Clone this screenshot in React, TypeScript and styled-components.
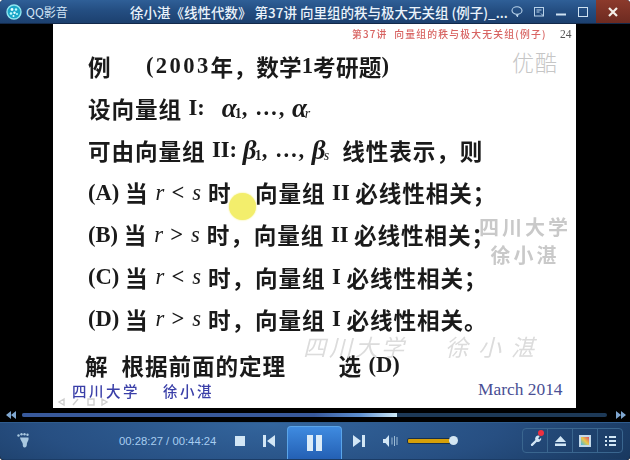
import React from "react";
import styled, { createGlobalStyle } from "styled-components";

const Global = createGlobalStyle`
  html, body { margin: 0; padding: 0; background: #fff; }
  #root { width: 630px; height: 460px; }
`;

const Win = styled.div`
  width: 630px; height: 460px; display: flex; flex-direction: column; overflow: hidden;
  background: #000; border-radius: 4px 4px 3px 3px;
  font-family: "Noto Sans CJK SC", "Liberation Sans", sans-serif;
`;
const TitleBar = styled.div`
  height: 24px; flex: none; display: flex; align-items: center; padding-left: 6px;
  background: linear-gradient(to bottom, #2f5f97 0%, #244e82 45%, #1c406f 100%);
  border-bottom: 1px solid #12294a; box-sizing: border-box;
`;
const AppName = styled.span`
  font: 12px "Noto Sans CJK SC", sans-serif; color: #d3e6f6; margin-left: 4px; width: 104px; white-space: nowrap;
`;
const Title = styled.span`
  font: 500 13.5px "Noto Sans CJK SC", sans-serif; color: #eaf3fb; width: 374px; white-space: nowrap;
`;
const WinButtons = styled.div`
  display: flex; align-items: center; margin-left: 2px; height: 100%;
`;
const WinBtn = styled.div`
  width: 22px; height: 23px; display: flex; align-items: center; justify-content: center;
`;
const CloseBtn = styled.div`
  width: 34px; height: 23px; margin-left: 2px; display: flex; align-items: center; justify-content: center;
  background: linear-gradient(#8c3a2c, #6d2a20);
`;
const Video = styled.div`
  height: 384px; flex: none; display: flex; justify-content: flex-start; padding-left: 53px; background: #000;
`;
const Slide = styled.div`
  position: relative; width: 523px; height: 384px; background: #fff; box-sizing: border-box; padding: 21px 0 0 35px;
  overflow: hidden;
`;
const Lines = styled.div`
  filter: blur(0.35px); color: #1a1a1a;
`;
const Line = styled.div<{ $h?: number; $shift?: number; $ls?: number }>`
  height: ${p => p.$h ?? 42.2}px; margin-left: ${p => p.$shift ?? 0}px; display: flex; align-items: center; white-space: pre;
  font: 700 22.6px "Liberation Serif", "Noto Sans CJK SC", serif; letter-spacing: ${p => p.$ls ?? 0.9}px;
  b { font-weight: 700; font-family: "Liberation Serif", serif; letter-spacing: 0; }
  i { font-family: "Liberation Serif", serif; font-style: italic; font-weight: 400; letter-spacing: 0; margin: 0 0.5px; }
  sub { font: italic 14px "Liberation Serif", serif; position: relative; top: 6px; vertical-align: baseline; line-height: 0; letter-spacing: 0; }
`;
const Year = styled.b`
  && { letter-spacing: 2.4px; }
`;
const Dots = styled.b`
  && { letter-spacing: 1px; }
`;
const Greek = styled.i`
  && { font-size: 27px; font-weight: 700; margin: 0 -2px 0 0; }
`;
const Num = styled.sub`
  && { font-style: normal; font-weight: 700; font-size: 14px; }
`;
const Header = styled.div`
  position: absolute; left: 299px; top: 3px; display: flex; align-items: center; filter: blur(0.3px);
  font: 500 9.8px "Noto Sans CJK SC", serif; color: #d86462; white-space: pre; letter-spacing: 1.2px;
`;
const PageNo = styled.span`
  position: absolute; left: 208px; top: 1px; color: #555; font: 11.5px "Liberation Serif", serif; letter-spacing: 0;
`;
const Youku = styled.div`
  position: absolute; left: 459px; top: 21px; font: 300 22px "Noto Sans CJK SC", sans-serif; color: #c6c6c6; letter-spacing: 1px;
`;
const Mark = styled.div`
  position: absolute; left: 425px; top: 189px; width: 94px; text-align: center; font: 700 20px/28px "Noto Sans CJK SC", serif;
  color: #c9c9c9; letter-spacing: 3px; filter: blur(0.3px);
`;
const MarkWide = styled.div`
  position: absolute; left: 250px; top: 305px; display: flex; gap: 38px; font: italic 400 23px "Noto Sans CJK SC", serif; color: #dcdcdc; white-space: pre; letter-spacing: 3px;
  filter: blur(0.4px);
`;
const MarkName = styled.span`
  letter-spacing: 10px;
`;
const Spot = styled.div`
  position: absolute; left: 176px; top: 169px; width: 27px; height: 27px; border-radius: 50%;
  background: #f3ee6c; box-shadow: 0 0 2px #f3ee6c;
`;
const Foot = styled.div`
  position: absolute; left: 19px; top: 356px; font: 500 14.5px "Noto Sans CJK SC", serif; color: #3a3fa8; white-space: pre; letter-spacing: 2.5px; filter: blur(0.3px);
`;
const March = styled.div`
  position: absolute; left: 425px; top: 355px; font: 17.4px "Liberation Serif", serif; color: #4a4f94;
`;
const SlideNav = styled.svg`
  position: absolute; left: 3px; top: 373px;
`;
const SeekRow = styled.div`
  height: 14px; flex: none; display: flex; align-items: center; background: #000; padding: 0 4px 0 6px;
`;
const Track = styled.div`
  flex: 1; height: 4px; margin: 0 9px 0 6px; border-radius: 2px; background: #1d3957; overflow: hidden;
`;
const Played = styled.div`
  height: 100%; background: linear-gradient(to right, #38599b 0%, #38599b 78%, #5d8fd0 90%, #cfeaf8 100%);
`;
const Controls = styled.div`
  flex: none; height: 38px; display: flex; align-items: center; position: relative;
  background: radial-gradient(ellipse 420px 90px at 270px 0, #33659d 0%, #274f82 55%, #17355a 100%);
  border-top: 1px solid #2f5c8e; border-bottom: 1px solid #1b3c66; box-sizing: border-box; padding: 0 0 1px 17px;
  border-radius: 0 0 4px 4px;
`;
const Time = styled.span`
  font: 11.3px "Liberation Sans", sans-serif; color: #a7cdf0; margin-left: 89px; width: 116px; white-space: nowrap;
`;
const Ico = styled.svg<{ $ml?: number }>`
  flex: none; display: block; margin-left: ${p => p.$ml ?? 0}px;
`;
const PlayBtn = styled.div`
  width: 55px; height: 33px; margin: 0 11px -1px 12px; align-self: flex-end; box-sizing: border-box; display: flex; align-items: center; justify-content: center;
  background: linear-gradient(#3f8be0, #2460b4); border: 1px solid #5aa5ea; border-bottom: 0; border-radius: 4px 4px 0 0; flex: none;
`;
const PauseBar = styled.div`
  width: 6px; height: 16px; background: #dcecf8; margin: 0 1.5px;
`;
const Volume = styled.div`
  width: 42px; height: 4px; margin-left: 9px; background: #d6a009; border: 1px solid #16304f; border-radius: 2px; flex: none; box-sizing: content-box;
`;
const Knob = styled.div`
  width: 9px; height: 9px; border-radius: 50%; background: #d3e6f3; margin-left: -2px; flex: none;
`;
const Tools = styled.div`
  display: flex; height: 23px; margin-left: 64px; border: 1px solid #3a668f; border-radius: 4px; flex: none; position: relative;
`;
const Tool = styled.div`
  width: 24px; display: flex; align-items: center; justify-content: center; border-left: 1px solid #3a668f;
  &:first-child { border-left: 0; }
`;
const Dot = styled.div`
  position: absolute; left: 15px; top: 1px; width: 6px; height: 6px; border-radius: 50%; background: #ee3040;
`;

export default function App() {
  return (
    <Win>
      <Global />
      <TitleBar>
        <Ico width="16" height="16" viewBox="0 0 16 16">
          <circle cx="8" cy="8" r="7" fill="#1aa6c8" stroke="#8fe6f0" strokeWidth="1.4" />
          <circle cx="6" cy="5.5" r="1.4" fill="#e8fbff" />
          <circle cx="10" cy="5.5" r="1.2" fill="#bff" />
          <circle cx="5" cy="9.5" r="1.3" fill="#bff" />
          <circle cx="8.5" cy="8.8" r="1.2" fill="#e8fbff" />
          <circle cx="11" cy="10" r="1" fill="#bff" />
          <circle cx="7.5" cy="12" r="1" fill="#e8fbff" />
        </Ico>
        <AppName>QQ影音</AppName>
        <Title>徐小湛《线性代数》 第37讲 向里组的秩与极大无关组 (例子)_...</Title>
        <WinButtons>
          <WinBtn>
            <Ico width="12" height="11" viewBox="0 0 12 11" fill="none" stroke="#b9d3ea" strokeWidth="1.1">
              <ellipse cx="6" cy="4.5" rx="5" ry="3.8" />
              <path d="M5 8.5 L6.5 10.500 L7 8" />
            </Ico>
          </WinBtn>
          <WinBtn>
            <Ico width="11" height="10" viewBox="0 0 11 10" fill="none" stroke="#b9d3ea" strokeWidth="1">
              <rect x="0.5" y="0.5" width="9" height="8.5" />
              <path d="M2.500 3h5M2.500 5h3M7 6.500l2.500 2.500" />
            </Ico>
          </WinBtn>
          <WinBtn>
            <Ico width="10" height="10" viewBox="0 0 10 10"><rect x="0" y="6.5" width="10" height="2" fill="#cfe2f2" /></Ico>
          </WinBtn>
          <WinBtn>
            <Ico width="10" height="10" viewBox="0 0 10 10" fill="none" stroke="#cfe2f2" strokeWidth="1"><rect x=".5" y=".5" width="9" height="9" /></Ico>
          </WinBtn>
          <CloseBtn>
            <Ico width="10" height="10" viewBox="0 0 10 10" stroke="#f4efe9" strokeWidth="2.2"><path d="M1 1l8 8M9 1l-8 8" /></Ico>
          </CloseBtn>
        </WinButtons>
      </TitleBar>
      <Video>
        <Slide>
          <Header>第37讲  向量组的秩与极大无关组(例子)<PageNo>24</PageNo></Header>
          <Youku>优酷</Youku>
          <Lines>
            <Line $ls={0.2}>例      <Year>(2003</Year>年，数学<b>1</b>考研题<b>)</b></Line>
            <Line>设向量组 <b>I:   </b><Greek>α</Greek><Num>1</Num><Dots>, …, </Dots><Greek>α</Greek><sub>r</sub></Line>
            <Line>可由向量组 <b>II: </b><Greek>β</Greek><Num>1</Num><Dots>, …, </Dots><Greek>β</Greek><sub>s</sub>  线性表示，则</Line>
            <Line><b>(A) </b>当 <i>r</i> &lt; <i>s</i> 时，向量组 <b>II </b>必线性相关；</Line>
            <Line><b>(B) </b>当 <i>r</i> &gt; <i>s</i> 时，向量组 <b>II </b>必线性相关；</Line>
            <Line><b>(C) </b>当 <i>r</i> &lt; <i>s</i> 时，向量组 <b>I </b>必线性相关；</Line>
            <Line><b>(D) </b>当 <i>r</i> &gt; <i>s</i> 时，向量组 <b>I </b>必线性相关。</Line>
            <Line $h={50} $shift={-3}>解  根据前面的定理        选 <b>(D)</b></Line>
          </Lines>
          <Mark>四川大学<br />徐小湛</Mark>
          <MarkWide><span>四川大学</span><MarkName>徐小湛</MarkName></MarkWide>
          <Spot />
          <Foot>四川大学    徐小湛</Foot>
          <March>March 2014</March>
          <SlideNav width="54" height="10" viewBox="0 0 54 10" fill="none" stroke="#cfcfcf" strokeWidth="1.4">
            <path d="M8 2L3 5l5 3zM17 8l5-6M32 2h6v6h-6zM46 2l5 3-5 3z" />
          </SlideNav>
        </Slide>
      </Video>
      <SeekRow>
        <Ico width="10" height="8" viewBox="0 0 10 8" fill="#7fa6cf"><path d="M5 0v8L0 4zM10 0v8L5 4z" /></Ico>
        <Track><Played style={{ width: `${(28 * 60 + 27) / (44 * 60 + 24) * 100}%` }} /></Track>
        <Ico width="10" height="8" viewBox="0 0 10 8" fill="#7fa6cf"><path d="M0 0v8l5-4zM5 0v8l5-4z" /></Ico>
      </SeekRow>
      <Controls>
        <Ico width="13" height="15" viewBox="0 0 13 15" fill="#a9c8e0">
          <circle cx="1.5" cy="2.5" r="1.2" /><circle cx="4.5" cy="1.3" r="1.2" /><circle cx="7.5" cy="1.3" r="1.2" /><circle cx="10.5" cy="1.800" r="1.2" />
          <path d="M3 4.500h8.500c.6 2.500-1 4-1.600 6 .2 2.400-.8 4-2.300 4s-2-1.600-1.800-3.600C5.500 9 3.200 7 3 4.500z" />
        </Ico>
        <Time>00:28:27 / 00:44:24</Time>
        <Ico width="10" height="10" viewBox="0 0 10 10" fill="#d2e6f5"><rect width="10" height="10" /></Ico>
        <Ico $ml={18} width="12" height="12" viewBox="0 0 12 12" fill="#d2e6f5"><path d="M0 0h3v12H0zM12 0v12L4 6z" /></Ico>
        <PlayBtn><PauseBar /><PauseBar /></PlayBtn>
        <Ico width="12" height="12" viewBox="0 0 12 12" fill="#d2e6f5"><path d="M0 0l8 6-8 6zM9 0h3v12H9z" /></Ico>
        <Ico $ml={18} width="15" height="12" viewBox="0 0 15 12" fill="#d2e6f5">
          <path d="M0 4h2.500L6 0v12L2.500 8H0z" />
          <path d="M9 2.500v7M11.500 1v10M14 2v8" stroke="#9dbcd6" strokeWidth="1" />
        </Ico>
        <Volume />
        <Knob />
        <Tools>
          <Tool>
            <Ico width="13" height="13" viewBox="0 0 24 24" fill="#d2e6f5"><path d="M14.700 6.300a4 4 0 0 1 5.400-1.700l-3.300 3.300 2.300 2.300 3.300-3.300a6 6 0 0 1-8 7.200L7 21.500a2.100 2.100 0 0 1-3-3l7.700-7.500a6 6 0 0 1 7.400-8z" /></Ico>
          </Tool>
          <Tool>
            <Ico width="11" height="10" viewBox="0 0 11 10" fill="#d2e6f5"><path d="M5.500 0L11 6H0zM0 7.500h11V10H0z" /></Ico>
          </Tool>
          <Tool>
            <svg width="12" height="12" viewBox="0 0 12 12">
              <defs>
                <linearGradient id="pal" x1="0" y1="1" x2="1" y2="0">
                  <stop offset="0" stopColor="#3fb9e8" /><stop offset=".5" stopColor="#e8c84a" /><stop offset="1" stopColor="#e0506a" />
                </linearGradient>
              </defs>
              <rect width="12" height="12" fill="#c4d9ea" />
              <rect x="2" y="2" width="8" height="8" fill="url(#pal)" />
            </svg>
          </Tool>
          <Tool>
            <Ico width="11" height="10" viewBox="0 0 11 10" fill="#d2e6f5"><path d="M0 0h2v2H0zM4 0h7v2H4zM0 4h2v2H0zM4 4h7v2H4zM0 8h2v2H0zM4 8h7v2H4z" /></Ico>
          </Tool>
          <Dot />
        </Tools>
      </Controls>
    </Win>
  );
}
